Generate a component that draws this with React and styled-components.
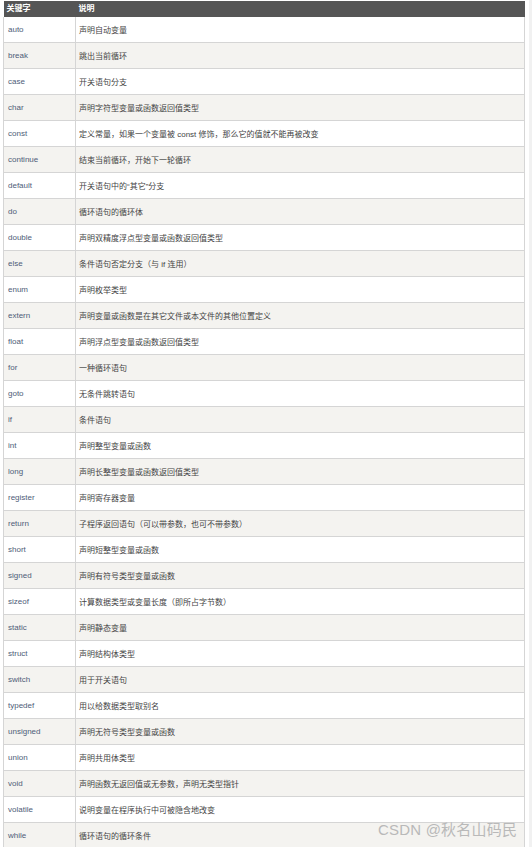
import React from "react";
import styled, { createGlobalStyle } from "styled-components";

const rows = [
  ["auto", "声明自动变量"],
  ["break", "跳出当前循环"],
  ["case", "开关语句分支"],
  ["char", "声明字符型变量或函数返回值类型"],
  ["const", "定义常量，如果一个变量被 const 修饰，那么它的值就不能再被改变"],
  ["continue", "结束当前循环，开始下一轮循环"],
  ["default", "开关语句中的“其它”分支"],
  ["do", "循环语句的循环体"],
  ["double", "声明双精度浮点型变量或函数返回值类型"],
  ["else", "条件语句否定分支（与 if 连用）"],
  ["enum", "声明枚举类型"],
  ["extern", "声明变量或函数是在其它文件或本文件的其他位置定义"],
  ["float", "声明浮点型变量或函数返回值类型"],
  ["for", "一种循环语句"],
  ["goto", "无条件跳转语句"],
  ["if", "条件语句"],
  ["int", "声明整型变量或函数"],
  ["long", "声明长整型变量或函数返回值类型"],
  ["register", "声明寄存器变量"],
  ["return", "子程序返回语句（可以带参数，也可不带参数）"],
  ["short", "声明短整型变量或函数"],
  ["signed", "声明有符号类型变量或函数"],
  ["sizeof", "计算数据类型或变量长度（即所占字节数）"],
  ["static", "声明静态变量"],
  ["struct", "声明结构体类型"],
  ["switch", "用于开关语句"],
  ["typedef", "用以给数据类型取别名"],
  ["unsigned", "声明无符号类型变量或函数"],
  ["union", "声明共用体类型"],
  ["void", "声明函数无返回值或无参数，声明无类型指针"],
  ["volatile", "说明变量在程序执行中可被隐含地改变"],
  ["while", "循环语句的循环条件"],
];

const GlobalStyle = createGlobalStyle`
  html, body {
    margin: 0;
    padding: 0;
    background: #ffffff;
    overflow: hidden;
  }
  body {
    font-family: "Liberation Sans", "Noto Sans CJK SC", sans-serif;
  }
`;

const Page = styled.div`
  display: flex;
  width: 532px;
  height: 847px;
  overflow: hidden;
  position: relative;
`;

const Content = styled.div`
  flex: 1;
  padding: 1px 4px 0 3px;
`;

const Track = styled.div`
  width: 3px;
  background: #f1f1f1;
`;

const Table = styled.table`
  width: 522px;
  border-collapse: collapse;
  table-layout: fixed;
  font-size: 8px;
`;

const KeyCol = styled.col`
  width: 72px;
`;

const HeadCell = styled.th`
  background: #555555;
  color: #ffffff;
  font-weight: bold;
  text-align: left;
  height: 16px;
  padding: 0 0 0 3px;
  line-height: 16px;
`;

const Row = styled.tr`
  background: ${(p) => (p.$odd ? "#f4f3f0" : "#ffffff")};
`;

const Cell = styled.td`
  height: 25px;
  border: 1px solid #d5d5d5;
  border-top: none;
  padding: 0 0 0 ${(p) => (p.$key ? "4px" : "3px")};
  color: ${(p) => (p.$key ? "#4e5d78" : "#444444")};
  vertical-align: middle;
  white-space: nowrap;
  overflow: hidden;
`;

const Watermark = styled.div`
  position: absolute;
  left: 378px;
  top: 818px;
  font-size: 15px;
  color: #b9b9b9;
  letter-spacing: 0.2px;
`;

export default function App() {
  return (
    <>
      <GlobalStyle />
      <Page>
        <Content>
          <Table>
            <colgroup>
              <KeyCol />
              <col />
            </colgroup>
            <thead>
              <tr>
                <HeadCell>关键字</HeadCell>
                <HeadCell>说明</HeadCell>
              </tr>
            </thead>
            <tbody>
              {rows.map(([k, d], i) => (
                <Row key={k} $odd={i % 2 === 1}>
                  <Cell $key>{k}</Cell>
                  <Cell>{d}</Cell>
                </Row>
              ))}
            </tbody>
          </Table>
        </Content>
        <Track />
        <Watermark>CSDN @秋名山码民</Watermark>
      </Page>
    </>
  );
}
